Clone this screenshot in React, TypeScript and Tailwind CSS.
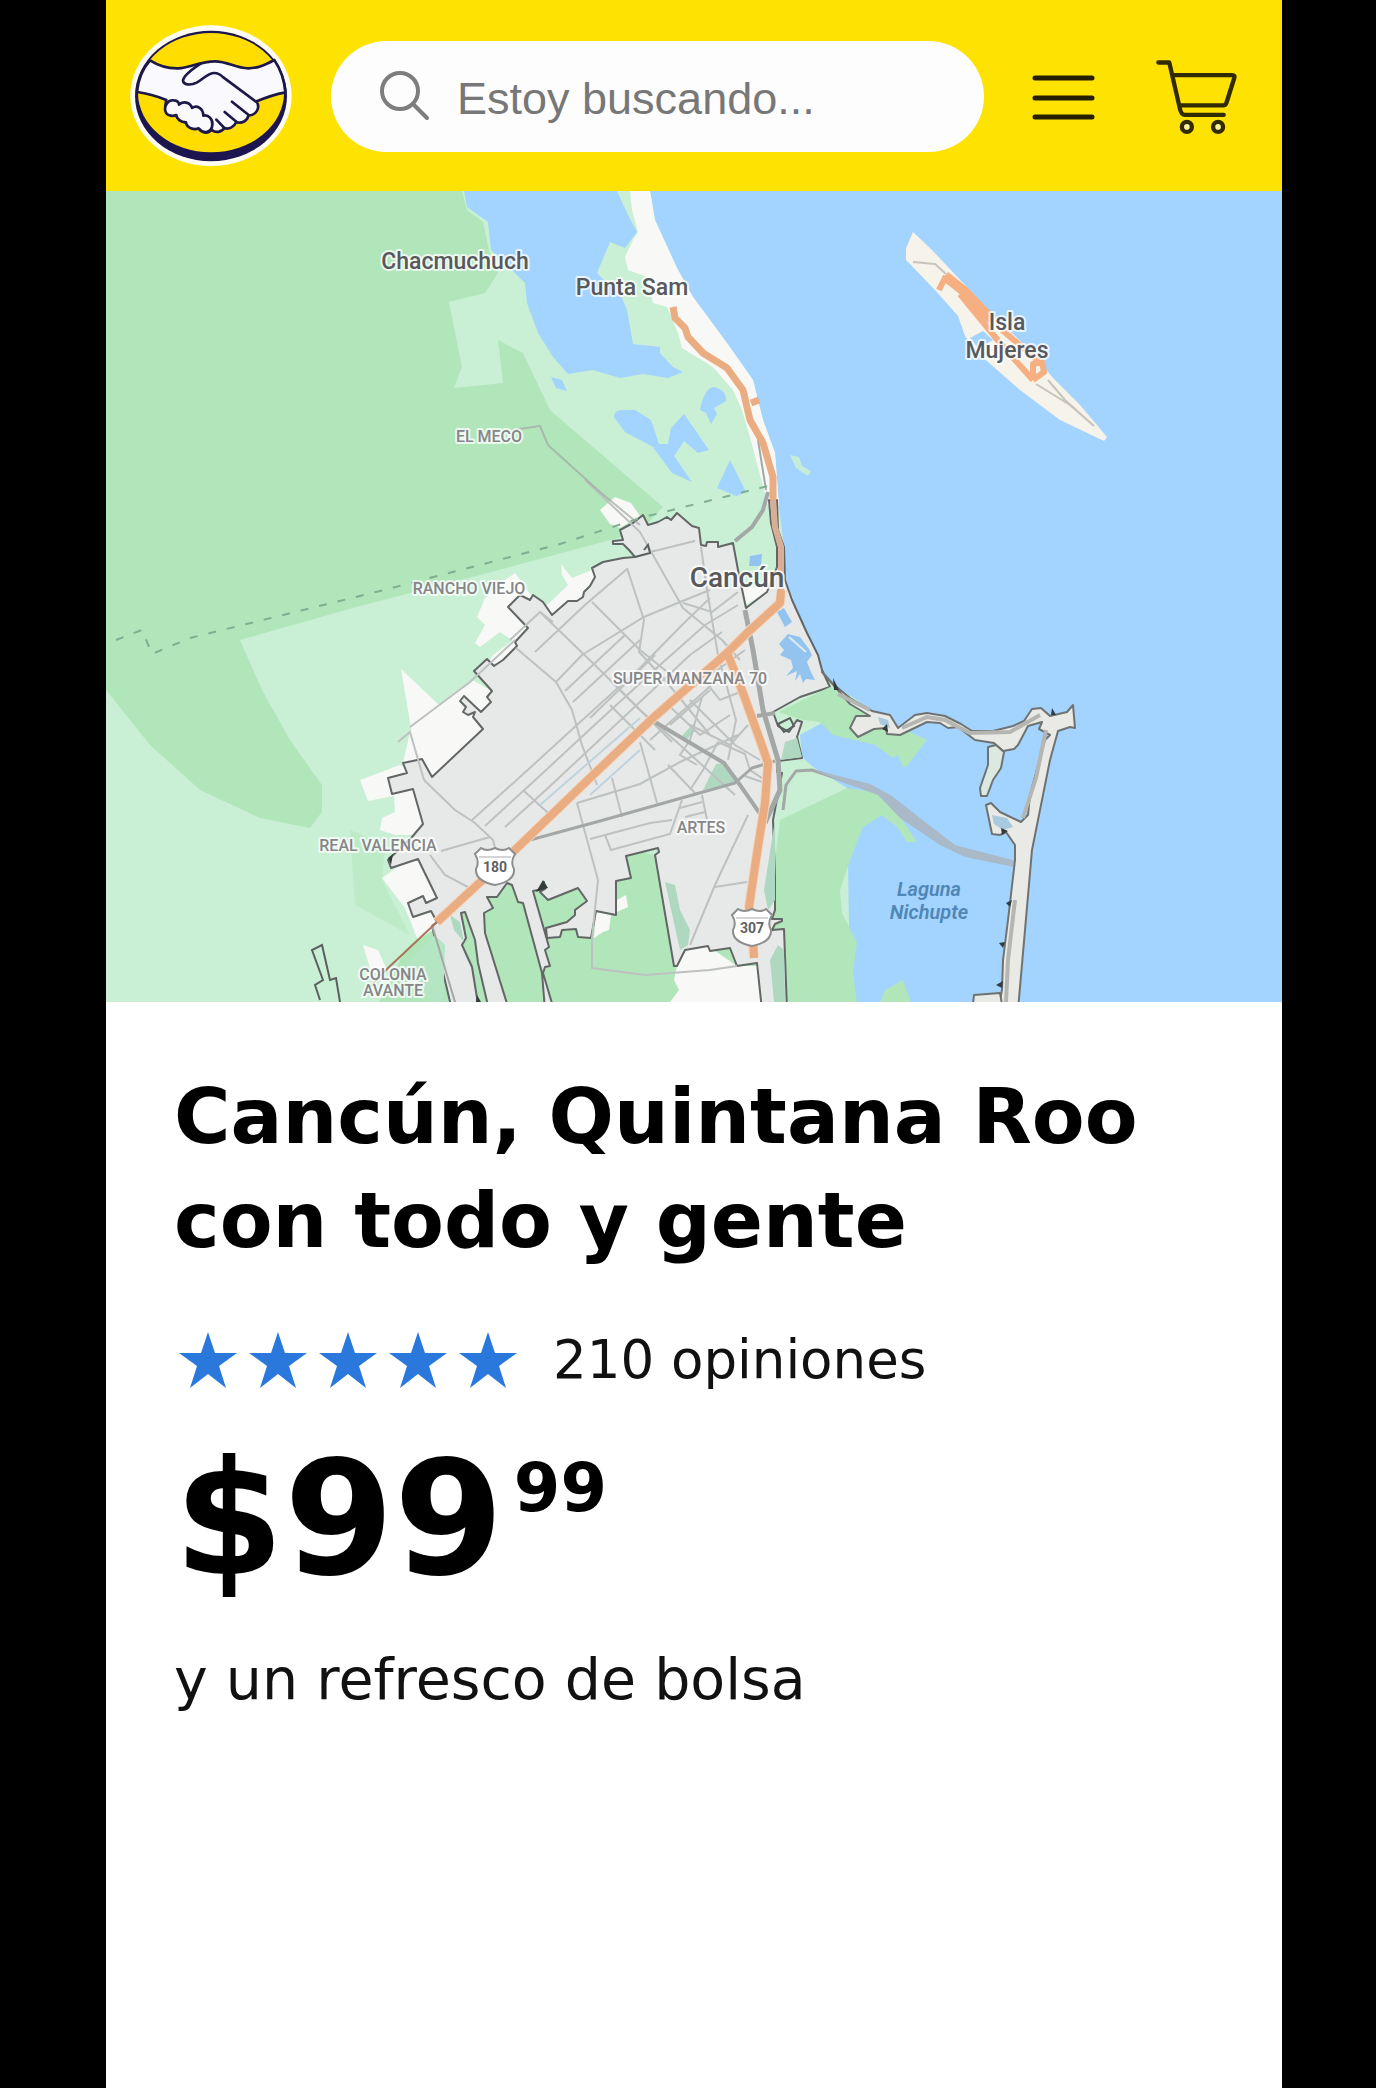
import React from 'react';

const HandshakeLogo = () => (
  <svg viewBox="90 75 486 423" className="w-[162px] h-[141px] flex-shrink-0" role="img" aria-label="Inicio">
    <ellipse cx="333" cy="287" rx="242" ry="211" fill="#fffdf2" />
    <ellipse cx="333" cy="288" rx="228" ry="196" fill="#1c1550" />
    <ellipse cx="333" cy="278" rx="219" ry="179" fill="#ffdd00" />
    <g stroke="#1c1848" strokeWidth="8" strokeLinejoin="round" strokeLinecap="round">
      <path
        fill="#fafafe"
        d="M150 181C180 200 205 206 235 205C270 203 300 184 345 184C385 184 405 205 445 205C475 205 500 192 523 180C540 205 553 240 556 277C525 283 498 292 470 304C482 325 468 345 445 347C443 362 425 372 409 366C402 382 386 389 373 384C364 398 346 399 335 389C324 403 303 399 296 384C282 389 262 382 258 367C242 366 230 357 229 345C210 346 195 335 196 318C197 310 198 305 199 300C170 288 142 280 111 276C114 240 127 207 150 181Z"
      />
      <path
        fill="none"
        d="M303 190C280 205 252 225 249 241C250 255 272 257 290 248C312 236 323 219 343 219C353 219 362 224 370 232L469 306M396 305L446 345M374 336L410 366M349 359L373 384"
      />
      <path
        fill="#fafafe"
        d="M199 340C188 320 204 298 222 301C232 302 237 307 237 314C248 302 271 306 276 324C291 314 310 325 310 347C325 343 339 357 337 375C335 396 312 405 296 385C283 391 260 384 258 367C242 367 230 357 229 345C218 350 205 347 199 340Z"
      />
    </g>
  </svg>
);

const SearchIcon = () => (
  <svg viewBox="0 0 50 51" className="w-[50px] h-[51px] flex-shrink-0" fill="none" stroke="#7d7d7d" strokeWidth="4" strokeLinecap="round">
    <circle cx="20" cy="20" r="18" />
    <path d="M33 33L47 47" />
  </svg>
);

const MenuIcon = () => (
  <svg viewBox="0 0 63 46" className="w-[63px] h-[46px]" stroke="#262000" strokeWidth="5" strokeLinecap="round">
    <path d="M3 3H60M3 23H60M3 42H60" />
  </svg>
);

const CartIcon = () => (
  <svg viewBox="528 176 244 228" className="w-[81px] h-[76px]" fill="none" stroke="#332b00" strokeWidth="13" strokeLinecap="round" strokeLinejoin="round">
    <path d="M535 186H568L600 325Q604 344 615 344H732M580 224H758Q766 224 764 232L740 308Q738 315 730 315H602" />
    <circle cx="621" cy="380" r="15" fill="#fff3a0" />
    <circle cx="715" cy="380" r="15" fill="#fff3a0" />
  </svg>
);

const Star = () => (
  <svg viewBox="0 0 58 56" className="w-[58px] h-[56px]" fill="#2a78dc">
    <path d="M29 0L36 21H58L40 34L47 56L29 42L11 56L18 34L0 21H22Z" />
  </svg>
);

const cityOutline =
  'M733 543L718 547L718 542L707 542L706 546L701 545L699 528L692 526L677 513L671 520L667 517L658 522L648 525L643 515L633 523L620 530L623 540L613 541L613 544L623 544L629 550L635 557L623 558L603 562L592 568L595 577L590 586L584 592L583 597L577 601L568 601L552 615L543 602L533 595L530 600L520 595L508 607L528 628L515 642L517 646L503 660L494 666L487 659L474 671L492 691L487 697L491 702L481 712L464 696L460 701L466 707L463 712L468 715L475 712L473 717L483 729L432 777L422 759L403 763L407 773L388 778L392 794L413 789L423 824L412 837L388 860L391 868L418 859L437 898L426 903L423 896L408 903L413 917L431 911L437 922L432 926L452 1010L478 1010L477 998L472 967L462 945L466 938L461 913L465 912L475 940L478 963L489 1010L509 1010L485 933L484 913L493 908L487 897L497 897L507 883L512 885L518 902L523 903L542 973L545 1010L554 1010L543 973L545 967L550 966L545 950L549 947L533 891L543 889L544 882L545 889L540 892L548 900L578 888L587 901L575 910L575 915L567 922L546 928L547 938L560 937L562 930L576 929L578 937L591 938L596 911L616 915L616 881L631 878L626 856L658 848L659 852L655 855L674 966L677 966L685 950L708 946L710 951L730 948L737 966L757 963L762 1010L787 1010L784 929L772 930L775 924L782 921L782 919L772 919L775 910L775 877L773 820L782 773L777 772L778 761L802 758L797 737L802 722L797 720L789 732L778 726L773 712L800 697L830 687L822 670L818 655L807 633L792 600L785 580L784 547L778 530L777 500L769 500L771 523L777 547L777 567L767 592L746 608L738 570Z';

const Shield = ({ x, y, label }: { x: number; y: number; label: string }) => (
  <g transform={`translate(${x} ${y})`}>
    <path
      d="M-14 -18Q-8 -14 0 -18Q8 -14 14 -18L20 -12Q15 -4 19 3Q20 15 0 19Q-20 15 -19 3Q-15 -4 -20 -12Z"
      fill="#fff"
      stroke="#8d8f8f"
      strokeWidth="2"
    />
    <path d="M-16 -9H16" stroke="#d5d5d5" strokeWidth="2" />
    <text y="6" fontSize="14" fontWeight="700" fill="#606163" textAnchor="middle">{label}</text>
  </g>
);

const CancunMap = () => (
  <svg
    viewBox="106 191 1176 811"
    className="block w-full bg-[#a3d3ff] [font-family:Roboto,sans-serif]"
    role="img"
    aria-label="Mapa de Cancún"
  >
    {/* mainland */}
    <path
      fill="#c9f0d5"
      d="M106 191H464L467 207L488 222L491 250L510 268L525 283L527 303L538 333L553 357L568 374L593 370L620 378L643 374L668 378L683 372L673 367L660 353L660 347L633 344L627 310L622 298L597 273L610 242L625 248L637 232L628 215L617 191H650L655 220L677 268L693 297L727 343L753 380L763 420L775 453L779 507L784 547L785 580L807 633L822 670L833 685L860 702L800 735L802 757L813 767L847 788L850 1002H106Z"
    />
    <path
      fill="#b1e6bb"
      d="M106 191H462L467 210L483 222L489 250L498 273L485 293L449 302L462 367L454 388L503 383L498 340L523 353L550 410L593 447L663 507L640 532L480 575L360 606L240 640L262 690L290 740L322 785V812L310 828L260 818L200 790L150 745L106 690Z"
    />
    {/* southern parks */}
    <path fill="#b1e6bb" d="M432 925L405 950L375 1010H870L857 1002L853 973L857 943L842 913L840 890L850 860L863 827L882 815L897 827L907 842L917 842L897 812L880 793L847 788L780 820L774 870L620 850L500 880Z" />
    <path fill="#b1e6bb" d="M880 1002L885 990L903 980L911 1002Z" />
    <path fill="#b1e6bb" d="M350 830L385 845L382 880L410 935L355 905Z" opacity=".5" />
    <path fill="#a3d3ff" d="M614 417Q614 410 622 410H635L651 420L659 444H668L671 428L684 414L709 450L698 453L684 441L674 456L692 482L672 473L653 447L625 432ZM551 377L562 380L567 391L556 388ZM700 410Q704 388 714 387Q727 390 726 401L714 408L717 414L711 424L706 413ZM730 460L746 492L736 496L717 488Z" />
    <path fill="#c4ecd9" d="M790 455L799 457L802 466L811 471L808 476L796 468Z" />
    {/* sand and outskirts */}
    <g fill="#f8f8f6">
      <path d="M630 191H650L655 220L677 268L693 297L727 343L753 380L763 420L775 453L779 505H768L750 437L742 410L733 390L713 367L682 348L678 333L667 307L653 303L647 277L628 270L625 257L633 240L638 232L632 210Z" />
      <path d="M600 510L615 497L631 503L640 516L620 528L610 524Z" />
      <path d="M485 598L505 580L515 573L533 598L528 628L515 642L500 632L480 647L475 643L485 625L477 617Z" />
      <path d="M561 564L572 578L592 570L595 578L585 598L568 603L552 615L545 607L568 585L562 575Z" />
      <path d="M493 655L513 640L520 645L500 663L487 664Z" />
      <path d="M401 669L440 706L450 696L472 680L492 691L491 702L483 729L432 777L421 760L403 763L411 728Z" />
      <path d="M360 780L400 765L425 780L427 835H395L380 830L382 818L395 812L394 796L368 801Z" />
      <path d="M382 878L410 858L423 859L440 900L440 925L418 940L405 908Z" />
      <path d="M363 945L378 950L387 970L378 975L370 968Z" />
      <path d="M596 912L611 915L609 930L603 932L594 938ZM617 900L626 895L628 907L617 912Z" />
      <path d="M677 966L685 950L708 946L737 966H757L762 1002H670L679 990L674 980Z" />
      <path d="M740 608L733 590L770 585L766 593Z" />
    </g>
    {/* urban area */}
    <path d={cityOutline} fill="#e7e9e8" stroke="#626665" strokeWidth="2" strokeLinejoin="round" />
    <path fill="#b1e6bb" d="M803 720L778 712L830 687L857 702L880 718L927 740L907 766L903 767L898 755L893 758L875 745L833 735L820 722Z" />
    <path fill="#afd8c0" d="M703 790L716 764L725 763L736 783ZM680 738L691 726L695 731L685 741ZM764 890L775 820V900L768 910ZM665 882L675 885L680 910L690 930L688 945L680 950ZM450 915L460 922L464 942L454 930ZM770 960L778 945L784 950L785 1002H774ZM785 742L797 738L802 757L781 760Z" />
    <path fill="#b5e6c4" d="M445 945L435 935L405 965L430 1002H443Z" />
    <path fill="#93c4ef" d="M777 612L784 608L792 622L785 627ZM779 644L788 634L800 637L809 649L812 655L807 662L811 672L815 680L806 679L803 683L800 674L795 681L797 671L786 676L793 668L791 660L780 655L784 650ZM750 556L762 554L761 566L749 566Z" />
    <path fill="none" stroke="#dfeaf0" strokeWidth="2" d="M789 637L806 652" />

    {/* city streets */}
    <g fill="none" stroke="#bdc1bf" strokeWidth="2">
      <path d="M585 480L640 532L683 608L722 640L740 660M627 568L644 620L639 652L665 680L710 735" />
      <path d="M510 640L540 612L553 622M535 652L585 605L627 569M540 612L600 670L640 710L680 745L735 795" />
      <path d="M516 648L556 682L572 710L582 745L597 785M592 602L640 650L690 690M556 682L582 655L644 617L680 602L710 590" />
      <path d="M650 552L695 541M701 547L707 590L718 655M683 603L712 612L738 592" />
      <path d="M472 820L520 777L578 724L640 668L682 625L710 598" />
      <path d="M485 826L532 783L600 720L660 665L705 625L738 605" />
      <path d="M505 827L548 788L610 730L690 655L722 632" />
      <path d="M523 790L548 813M565 691L625 635M573 702L640 640M590 718L655 655" />
      <path d="M424 780L455 810L475 823L493 840L497 855M441 851L490 837M430 855L445 875L470 888" />
      <path d="M398 742L410 732L424 780M410 727L470 682L515 640M577 803L598 880L592 938V968L645 975L710 970L737 966" />
      <path d="M577 803L640 784L680 762L738 735M590 839L650 823L672 820M605 835L611 850L670 834L682 800" />
      <path d="M748 815L715 885L690 945M715 887L747 882M612 778L622 817M640 742L657 803M668 765L695 793M640 735L690 690L745 650" />
      <path d="M702 795L707 820M680 808L702 802M685 817L705 812M702 697L690 740L680 755L697 765M718 655L725 680L736 720L728 760" />
      <path d="M700 675L720 700L745 690M690 700L735 745L760 760M665 702L700 735L730 715M718 742L745 754L750 770L765 780M670 725L710 690M650 740L715 682M690 725L730 745L748 725" />
      <path d="M742 775L762 782M690 790L703 770L718 742M610 705L655 750M620 690L672 742" />
    </g>
    <path fill="none" stroke="#bfd3dc" strokeWidth="2" d="M540 805L640 718M590 795L640 750" />
    {/* main grey avenues */}
    <g fill="none" stroke="#a3a7a5" strokeLinejoin="round">
      <path strokeWidth="2" d="M512 430L540 426L548 445L600 492L640 525" opacity=".7" />
      <path strokeWidth="3" d="M530 840L600 821L735 783L752 768L775 761" />
      <path strokeWidth="4" d="M655 722L724 763L740 785L763 818" />
      <path strokeWidth="5" d="M745 610L753 650L763 710L778 760L780 790L765 823" />
      <path strokeWidth="4" d="M768 492L763 510L752 527L735 541M757 716L775 713" />
      <path strokeWidth="3" d="M783 810L786 785L796 771L812 770L880 793" />
      <path strokeWidth="2" d="M432 925L455 1002M758 440L766 490" />
    </g>
    <path fill="#aab9c8" d="M812 769L870 784L892 796L925 822L955 845L1016 861L1014 867L965 857L940 845L900 818L878 795L845 783Z" />
    <path fill="none" stroke="#7fae91" strokeWidth="2" strokeDasharray="8 11" d="M116 640L142 630L152 654L190 638L380 591L560 544L640 518L768 486" />

    {/* highways */}
    <g fill="none" stroke="#f3d6c0" strokeWidth="10" strokeLinejoin="round">
      <path d="M782 590L780 603L747 633L727 653L653 718L593 775L515 850L437 922M727 653L743 693L768 763L765 803L757 853L749 907L754 958" />
    </g>
    <g fill="none" stroke="#eaad82" strokeWidth="8" strokeLinejoin="round">
      <path d="M781 590L780 603L747 633L727 653L653 718L593 775L515 850L437 922" />
      <path d="M727 653L733 667L743 693L760 740L768 763L765 803L757 853L749 907L753 933L754 958" />
      <path strokeWidth="7" d="M673 307L675 318L685 328L688 337L703 353L727 368L743 390L750 420L763 443L773 477L773 500M751 403L759 400" />
    </g>
    <path d="M773 500L775 527L781 547V590" fill="none" stroke="#d8ae98" strokeWidth="6" />
    <path d="M437 922L387 969L370 987" fill="none" stroke="#a6765d" strokeWidth="2" />

    {/* hotel zone */}
    <g fill="#e9e9e5" stroke="#6e7372" strokeWidth="2" strokeLinejoin="round">
      <path d="M822 672L833 684L850 698L872 711L890 715L898 728L915 715L927 713L945 716L961 724L972 731L993 731L1013 726L1024 721L1032 709L1041 708L1050 716L1067 712L1073 705L1075 728L1070 727L1058 731L1050 760L1032 850L1025 930L1018 1010H998L1002 990L1003 960L1008 920L1015 860L1015 845L1006 832L1000 835L992 834L986 805L991 803L1000 812L1021 822L1028 815L1030 795L1045 740L1050 735L1039 729L1042 722L1028 726L1018 745L1014 749L1003 751L994 743L975 740L958 727L948 728L940 723L927 722L900 735L887 734L886 728L874 729L858 737L850 728L856 716L870 716L850 704Z" />
      <path fill="#dbe9e0" d="M988 747L996 745L1004 752L1001 768L993 780L987 796L981 796L980 788L988 765Z" />
      <path d="M973 1004L974 995L1000 993L1002 1004Z" />
    </g>
    <path fill="none" stroke="#b5b5b2" strokeWidth="4" d="M838 694L870 710M902 728L927 717L945 720L970 733L1010 732L1040 715M1046 730L1036 778L1023 818M1015 900L1008 960L1006 1002" />
    <path fill="#a9c9df" d="M992 815L1007 818L1013 827L1003 830L994 824ZM878 717L888 720L890 728L880 724Z" />
    <path fill="#333c3c" d="M833 678L839 690L834 690ZM1001 828L1008 831L1002 835ZM882 729L887 724L888 732ZM543 880L548 888L536 892ZM477 995L481 1002H476ZM388 858L393 854L391 865ZM1052 708L1056 715H1051ZM1006 903L1012 900L1010 907ZM999 943L1005 942L1003 948ZM996 985L1003 981L1002 988Z" />
    <path fill="none" stroke="#59605f" strokeWidth="2" d="M778 724L790 718L794 726L784 732ZM320 1000L315 985L323 980L312 950L322 945L330 980L336 978L340 1002M644 550L648 545L650 553L635 557" />

    {/* Isla Mujeres */}
    <path fill="#f5f3ea" d="M913 232L932 250L965 285L1000 322L1030 350L1053 378L1080 405L1107 437L1104 441L1060 420L1020 390L980 355L965 336L958 316L935 290L906 260V248Z" />
    <path fill="#a3d3ff" d="M983 331L993 340L978 348L970 338Z" />
    <g fill="none" stroke="#f5af80" strokeLinejoin="round">
      <path strokeWidth="10" d="M945 276L965 292L992 320" />
      <path strokeWidth="6" d="M939 290L946 276M960 294L1000 343L1033 380M1002 330L1042 364" />
      <path strokeWidth="6" d="M1033 380L1044 372L1042 362L1033 364L1033 380" />
    </g>
    <path fill="none" stroke="#c9c4ba" strokeWidth="2" d="M913 262L935 264L946 274M1036 384L1070 405L1094 426L1065 400L1048 380" />

    <Shield x={495} y={866} label="180" />
    <Shield x={752} y={927} label="307" />

    {/* place names */}
    <g fill="#58595c" stroke="#fff" strokeOpacity=".75" strokeWidth="4" strokeLinejoin="round" paintOrder="stroke" fontWeight="500" textAnchor="middle">
      <g fontSize="23">
        <text x="455" y="269">Chacmuchuch</text>
        <text x="632" y="295">Punta Sam</text>
        <text x="1007" y="330">Isla</text>
        <text x="1007" y="358">Mujeres</text>
      </g>
      <text x="737" y="587" fontSize="28">Cancún</text>
      <g fontSize="16" fill="#858688">
        <text x="489" y="442">EL MECO</text>
        <text x="469" y="594">RANCHO VIEJO</text>
        <text x="690" y="684">SUPER MANZANA 70</text>
        <text x="378" y="851">REAL VALENCIA</text>
        <text x="701" y="833">ARTES</text>
        <text x="393" y="980">COLONIA</text>
        <text x="393" y="996">AVANTE</text>
      </g>
    </g>
    <g fill="#4f86b5" fontSize="20" fontWeight="600" fontStyle="italic" textAnchor="middle">
      <text x="929" y="896">Laguna</text>
      <text x="929" y="919">Nichupte</text>
    </g>
  </svg>
);

const Header = () => (
  <header className="flex items-center h-[191px] pl-[24px] pr-[45px] bg-[#fee302]">
    <a href="#" className="mr-[39px]">
      <HandshakeLogo />
    </a>
    <label className="flex flex-1 min-w-0 items-center h-[111px] pl-[49px] pr-8 mr-[48px] mt-[2px] rounded-full bg-[#fdfdfd]">
      <SearchIcon />
      <input
        type="text"
        placeholder="Estoy buscando..."
        aria-label="Buscar"
        className="w-full min-w-0 ml-[27px] mt-[4px] bg-transparent outline-none text-[45px] text-[#777] placeholder:text-[#777] [font-family:'Liberation_Sans',sans-serif]"
      />
    </label>
    <button aria-label="Menú" className="mr-[61px] mt-[4px]">
      <MenuIcon />
    </button>
    <button aria-label="Carrito" className="mt-[2px]">
      <CartIcon />
    </button>
  </header>
);

const App: React.FC = () => {
  return (
    <div className="min-h-screen flex bg-black pl-[106px] pr-[94px]">
      <div className="flex-1 min-w-0 bg-white text-black [font-family:'DejaVu_Sans',sans-serif]">
        <Header />
        <CancunMap />
        <main className="px-[68px] pt-[63px] pb-16">
          <h1 className="text-[77px] leading-[104px] font-bold">Cancún, Quintana Roo con todo y gente</h1>
          <div className="flex items-center mt-[57px] pl-[5px]">
            <div className="flex gap-3" role="img" aria-label="5 de 5 estrellas">
              {[1, 2, 3, 4, 5].map((n) => (
                <Star key={n} />
              ))}
            </div>
            <span className="ml-[36px] text-[53px] leading-[60px] text-[#111]">210 opiniones</span>
          </div>
          <p className="flex items-start mt-[50px] font-bold">
            <span className="text-[158px] leading-[158px]">$99</span>
            <span className="ml-[10px] mt-[15px] text-[67px] leading-[67px]">99</span>
          </p>
          <p className="mt-[47px] text-[57px] leading-[68px] text-[#111]">y un refresco de bolsa</p>
        </main>
      </div>
    </div>
  );
};

export default App;
